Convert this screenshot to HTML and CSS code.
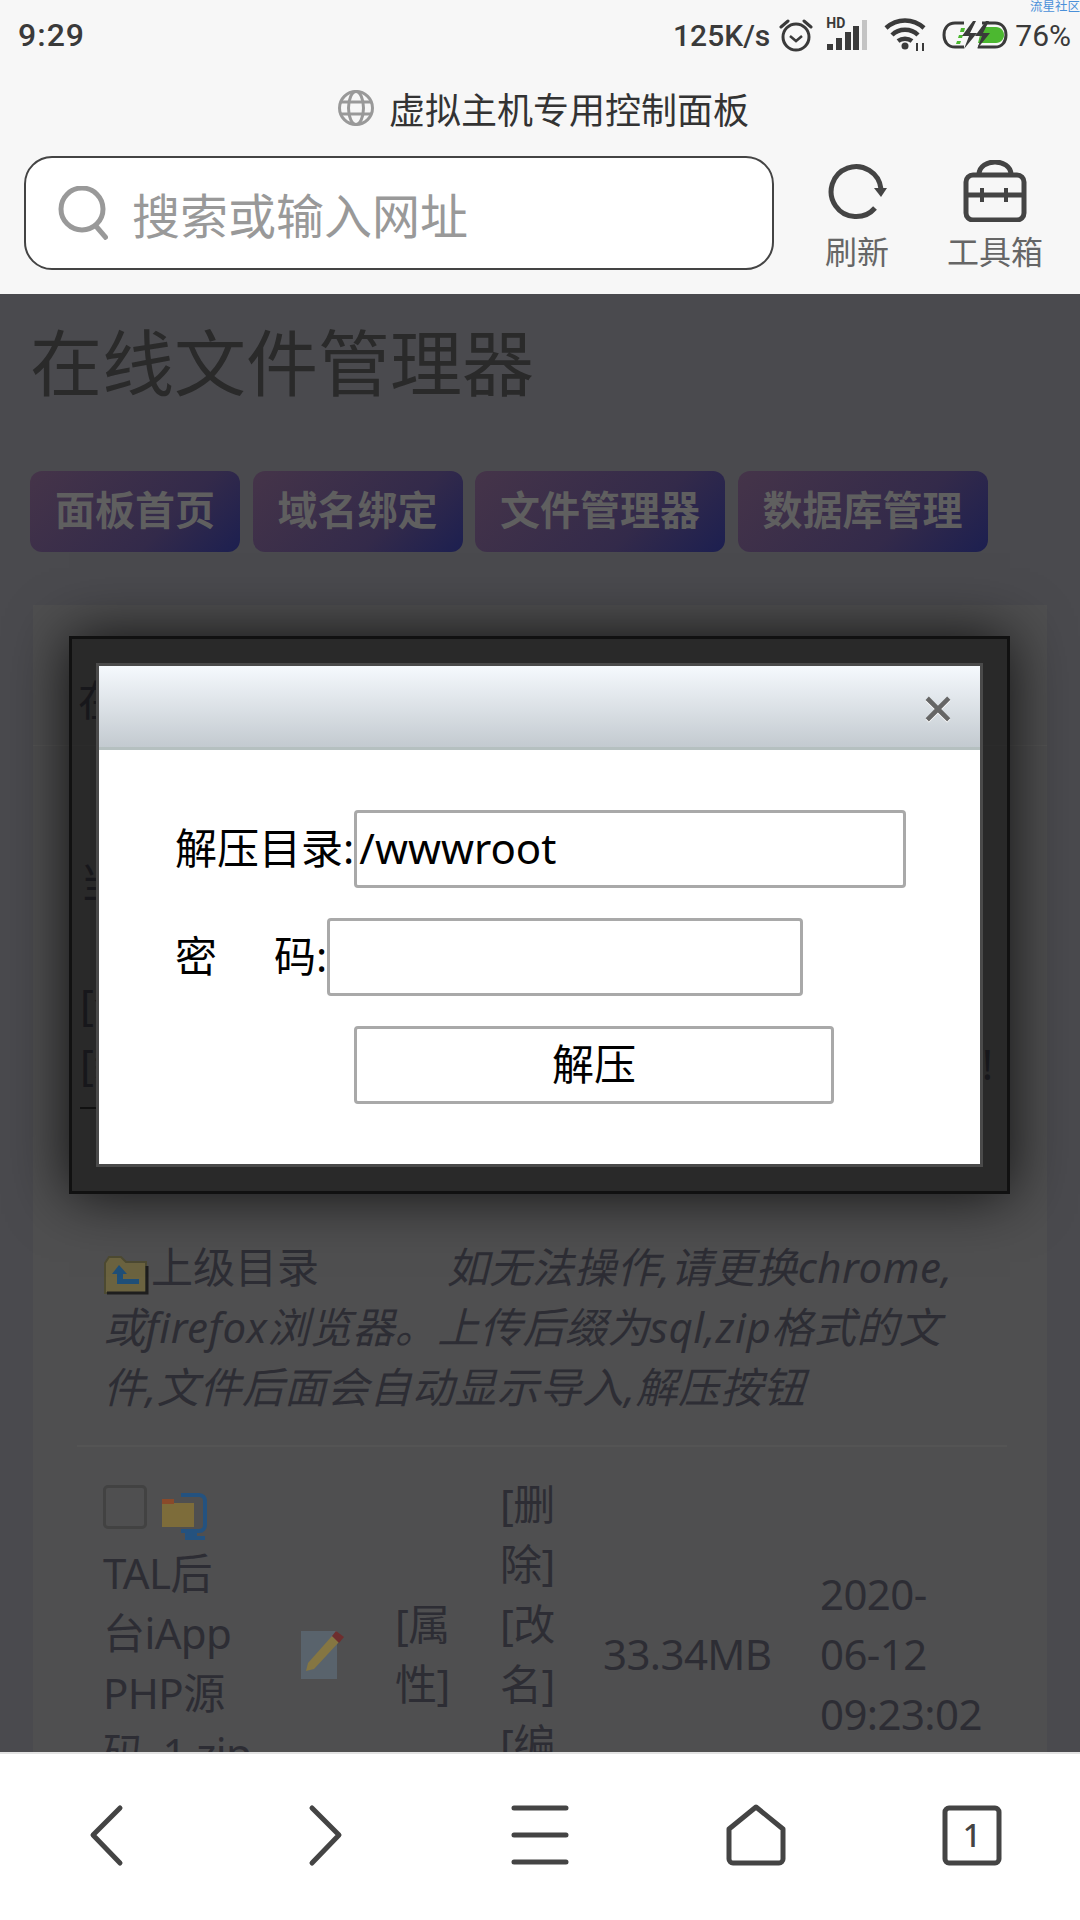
FILE: index.html
```html
<!DOCTYPE html>
<html lang="zh-CN">
<head>
  <meta charset="UTF-8" />
  <meta name="viewport" content="width=device-width, initial-scale=1" />
  <title>在线文件管理器</title>
  <link rel="stylesheet" href="styles.css">
</head>
<body>
  <div class="phone">
    <span class="watermark">流星社区</span>

    <!-- status bar -->
    <div class="statusbar">
      <span class="time">9:29</span>
      <div class="status-right">
        <span class="speed">125K/s</span>
        <svg class="st-clock" width="34" height="34" viewBox="0 0 34 34" fill="none" stroke="#3a3a3a" stroke-width="3">
          <circle cx="17" cy="19" r="13"/>
          <path d="M11 18l6 5 6-5" stroke-width="2.5"/>
          <path d="M2 9l7-6M32 9l-7-6" stroke-linecap="round"/>
        </svg>
        <span class="signal">
          <span class="hd">HD</span>
          <svg width="42" height="30" viewBox="0 0 42 30" fill="#3a3a3a">
            <rect x="1" y="24" width="6" height="6"/>
            <rect x="10" y="18" width="6" height="12"/>
            <rect x="19" y="12" width="6" height="18"/>
            <rect x="27" y="6" width="6" height="24"/>
            <rect x="36" y="0" width="5" height="30" fill="#c4c4c4"/>
          </svg>
        </span>
        <svg class="st-wifi" width="44" height="34" viewBox="0 0 44 34" fill="none" stroke="#3a3a3a" stroke-width="4.5">
          <path d="M2 10c11-10 27-10 38 0"/>
          <path d="M8 17c7-7 19-7 26 0"/>
          <path d="M14 23c4-3 10-3 14 0"/>
          <circle cx="21" cy="28" r="3.5" fill="#3a3a3a" stroke="none"/>
          <path d="M33 25v8M39 25v8" stroke-width="2"/>
        </svg>
        <svg class="st-batt" width="66" height="28" viewBox="0 0 66 28" fill="none">
          <path d="M22 2H13C6 2 2 7 2 14s4 12 11 12h9" stroke="#3a3a3a" stroke-width="3"/>
          <path d="M40 2h13c7 0 11 5 11 12s-4 12-11 12H36" stroke="#3a3a3a" stroke-width="3"/>
          <path d="M40 6h14c5 0 8 4 8 8s-3 8-8 8H36z" fill="#4cb830"/>
          <path d="M19 7h4l-1 4h-4zM17 14h4l-1 3h-4zM15 20h4l-1 3h-4z" fill="#4cb830"/>
          <path d="M31 0L20 15h7l-5 13 13-16h-7l6-12zM44 0L33 15h7l-5 13 13-16h-7l6-12z" fill="#3a3a3a"/>
        </svg>
        <span class="batt-text">76%</span>
      </div>
    </div>

    <!-- site name -->
    <div class="sitebar">
      <svg width="36" height="36" viewBox="0 0 36 36" fill="none" stroke="#999" stroke-width="3">
        <circle cx="18" cy="18" r="16.5"/>
        <ellipse cx="18" cy="18" rx="7.5" ry="16.5"/>
        <path d="M3 12h30M3 24h30"/>
      </svg>
      <span>虚拟主机专用控制面板</span>
    </div>

    <!-- search and tools -->
    <div class="searchbar">
      <div class="searchbox">
        <svg width="50" height="54" viewBox="0 0 50 54" fill="none" stroke="#999" stroke-width="5">
          <circle cx="24" cy="23" r="21"/>
          <path d="M37 39l12 14"/>
        </svg>
        <span>搜索或输入网址</span>
      </div>
      <div class="tool tool-refresh">
        <svg width="60" height="62" viewBox="0 0 60 62" fill="none" stroke="#444" stroke-width="5">
          <path d="M48 48A25 25 0 1 1 54 29"/>
          <path d="M47 28h13l-6 9z" fill="#444" stroke="none"/>
        </svg>
        <span>刷新</span>
      </div>
      <div class="tool tool-box">
        <svg width="64" height="62" viewBox="0 0 64 62" fill="none" stroke="#444" stroke-width="5">
          <rect x="3" y="15" width="58" height="45" rx="7"/>
          <path d="M16 14C17 -2 47 -2 48 14"/>
          <path d="M3 35h58"/>
          <path d="M19 28v14M43 28v14" stroke-width="4"/>
        </svg>
        <span>工具箱</span>
      </div>
    </div>

    <!-- web page, dimmed while the dialog is open -->
    <div class="webview">
      <h1 class="page-title">在线文件管理器</h1>
      <div class="page-nav">
        <a class="nav-btn">面板首页</a>
        <a class="nav-btn">域名绑定</a>
        <a class="nav-btn">文件管理器</a>
        <a class="nav-btn">数据库管理</a>
      </div>

      <div class="card">
        <div class="sec-head">在线文件管理</div>
        <div class="sec-path">
          <div class="path-line">当前目录</div>
          <div class="link-line">[全选]</div>
          <div class="link-line link-between"><span>[新建]</span><span>!</span></div>
          <div class="dash"></div>
        </div>

        <div class="sec-up">
          <svg class="up-icon" width="46" height="40" viewBox="0 0 46 40">
            <path d="M2 8l4-6h12l5 5h20v31H2z" fill="#6b6340" stroke="#4d4a32" stroke-width="2"/>
            <path d="M44 11v27H4" fill="none" stroke="#1e1e1e" stroke-width="3"/>
            <path d="M16 10l-7 9h5v10h22v-5H20v-5h4z" fill="#1f4f78"/>
          </svg><span class="up-link">上级目录</span><em class="up-note">　　　如无法操作,请更换chrome,<br>或firefox浏览器。上传后缀为sql,zip格式的文<br>件,文件后面会自动显示导入,解压按钮</em>
        </div>

        <div class="file-row">
          <div class="file-name">
            <div class="file-check">
              <span class="checkbox"></span>
              <svg width="46" height="48" viewBox="0 0 46 48">
                <path d="M20 2h18c4 0 6 3 6 6v24c0 3-2 6-6 6H20" fill="none" stroke="#24527f" stroke-width="4"/>
                <path d="M24 38h12v5h8v4H24z" fill="#24527f"/>
                <rect x="1" y="10" width="32" height="24" fill="#7d6c3a"/>
                <rect x="1" y="6" width="12" height="5" fill="#8a4a2a"/>
              </svg>
            </div>
            TAL后<br>台iApp<br>PHP源<br>码_1.zip
          </div>
          <svg class="edit-icon" width="46" height="50" viewBox="0 0 46 50">
            <rect x="1" y="2" width="36" height="48" fill="#59636c"/>
            <path d="M8 34L32 7l7 6-25 27-8 2z" fill="#857642"/>
            <path d="M32 7l4-5 8 6-5 6z" fill="#6e2e2e"/>
          </svg>
          <div>[属<br>性]</div>
          <div>[删<br>除]<br>[改<br>名]<br>[编<br>辑]</div>
          <div>33.34MB</div>
          <div>2020-<br>06-12<br>09:23:02</div>
        </div>
      </div>

      <!-- unzip dialog -->
      <div class="modal">
        <div class="modal-inner">
          <div class="modal-head"><span class="modal-close">×</span></div>
          <form class="modal-body">
            <label class="form-row"><span class="form-label">解压目录:</span><input class="input-path" type="text" value="/wwwroot"></label>
            <label class="form-row"><span class="form-label">密<span class="label-gap"></span>码:</span><input class="input-pass" type="text"></label>
            <div class="form-row form-submit"><button type="button">解压</button></div>
          </form>
        </div>
      </div>
    </div>

    <!-- browser toolbar -->
    <div class="toolbar">
      <svg width="64" height="64" viewBox="0 0 64 64" fill="none" stroke="#444" stroke-width="5" stroke-linecap="round" stroke-linejoin="round">
        <path d="M44 5L17 32l27 28"/>
      </svg>
      <svg width="64" height="64" viewBox="0 0 64 64" fill="none" stroke="#444" stroke-width="5" stroke-linecap="round" stroke-linejoin="round">
        <path d="M20 5l27 27-27 28"/>
      </svg>
      <svg width="64" height="64" viewBox="0 0 64 64" fill="none" stroke="#444" stroke-width="5" stroke-linecap="round">
        <path d="M6 5h52M6 32h52M6 59h52"/>
      </svg>
      <svg width="64" height="64" viewBox="0 0 64 64" fill="none" stroke="#444" stroke-width="5" stroke-linejoin="round">
        <path d="M5 26L32 4l27 22v30a4 4 0 0 1-4 4H9a4 4 0 0 1-4-4z"/>
      </svg>
      <svg width="64" height="64" viewBox="0 0 64 64" fill="none" stroke="#444" stroke-width="5">
        <rect x="5" y="5" width="54" height="55" rx="4"/>
        <text x="32" y="44" text-anchor="middle" font-size="32" font-weight="500" fill="#444" stroke="none">1</text>
      </svg>
    </div>
  </div>
</body>
</html>
```

FILE: styles.css
```css
* {
  margin: 0;
  padding: 0;
  box-sizing: border-box;
}
html, body {
  width: 1080px;
  height: 1920px;
  overflow: hidden;
}
body {
  font-family: "Noto Sans", "Noto Sans CJK SC", sans-serif;
  background: #f7f7f7;
  color: #222;
}
.phone {
  position: relative;
  width: 1080px;
  height: 1920px;
  display: flex;
  flex-direction: column;
}
.watermark {
  position: absolute;
  top: 0;
  right: 0;
  font-size: 12.5px;
  line-height: 13px;
  color: #4a90d9;
}

/* status bar */
.statusbar {
  height: 60px;
  flex: none;
  display: flex;
  justify-content: space-between;
  align-items: center;
  padding: 10px 9px 0 18px;
  font-family: Roboto, sans-serif;
  color: #3a3a3a;
}
.time {
  font-size: 32px;
  font-weight: 500;
  letter-spacing: 1px;
}
.status-right {
  display: flex;
  align-items: center;
}
.speed {
  font-size: 30px;
  font-weight: 500;
}
.st-clock {
  margin-left: 9px;
}
.signal {
  position: relative;
  margin-left: 13px;
  height: 30px;
}
.hd {
  position: absolute;
  left: 0;
  top: -4px;
  font-size: 14px;
  font-weight: 700;
  line-height: 14px;
}
.st-wifi {
  margin-left: 16px;
}
.st-batt {
  margin-left: 14px;
}
.batt-text {
  margin-left: 7px;
  font-size: 30px;
}

/* site name */
.sitebar {
  height: 96px;
  flex: none;
  display: flex;
  justify-content: center;
  align-items: center;
  gap: 15px;
  padding-left: 7px;
  font-size: 36px;
  color: #333;
}

/* search */
.searchbar {
  height: 138px;
  flex: none;
  display: flex;
  align-items: flex-start;
  padding-left: 24px;
}
.searchbox {
  width: 750px;
  height: 114px;
  display: flex;
  align-items: center;
  gap: 24px;
  padding-left: 32px;
  background: #fff;
  border: 2px solid #444;
  border-radius: 28px;
  font-size: 48px;
  color: #999;
}
.tool {
  display: flex;
  flex-direction: column;
  align-items: center;
  padding-top: 4px;
  font-size: 32px;
  line-height: 44px;
  color: #666;
}
.tool span {
  margin-top: 8px;
}
.tool-refresh {
  width: 96px;
  margin-left: 35px;
}
.tool-box {
  width: 120px;
  margin-left: 30px;
}

/* dimmed web page */
.webview {
  position: relative;
  flex: 1;
  overflow: hidden;
  background: #4a4a4e;
  font-size: 42px;
  line-height: 60px;
  color: #2d2d34;
}
.page-title {
  margin: 23px 0 0 30px;
  font-size: 72px;
  line-height: 90px;
  font-weight: 400;
  color: #2a2a2a;
}
.page-nav {
  display: flex;
  gap: 12.5px;
  margin: 64px 0 0 30px;
}
.nav-btn {
  height: 81px;
  padding: 0 25px;
  border-radius: 12px;
  background: linear-gradient(135deg, #453449, #332a4a 65%, #1c1f50);
  color: #5f5f5f;
  font-size: 40px;
  line-height: 78px;
  font-weight: 700;
}

.card {
  width: 1014px;
  margin: 53px 0 0 33px;
  background: #4f4f50;
  height: 1200px;
}
.sec-head {
  padding: 65px 0 15px 45px;
  border-bottom: 1px solid #545454;
}
.sec-path {
  padding: 106px 54px 0 47px;
}
.path-line + .link-line {
  margin-top: 62px;
}
.link-between {
  display: flex;
  justify-content: space-between;
}
.dash {
  width: 40px;
  height: 2px;
  margin-top: 13px;
  background: #222;
}
.sec-up {
  margin: 128px 40px 0 44px;
  padding: 0 0 28px 26px;
  border-bottom: 2px solid #545454;
}
.up-icon {
  vertical-align: -12px;
  margin-right: 2px;
}
.up-note {
  font-style: italic;
  letter-spacing: .5px;
}

.file-row {
  display: grid;
  grid-template-columns: 197px 95px 105px 103px 217px auto;
  align-items: center;
  margin: 27px 0 0 70px;
  height: 360px;
  letter-spacing: -.6px;
}
.file-name {
  align-self: start;
}
.file-check {
  height: 69px;
  display: flex;
  align-items: flex-end;
  gap: 14px;
  padding-bottom: 2px;
}
.checkbox {
  width: 44px;
  height: 44px;
  margin-bottom: 12px;
  border: 3px solid #424242;
  border-radius: 5px;
}

/* dialog */
.modal {
  position: absolute;
  left: 69px;
  top: 342px;
  width: 941px;
  padding: 24px;
  background: rgba(0, 0, 0, .48);
  border: 3px solid #111;
  box-shadow: 0 0 56px rgba(0, 0, 0, .8);
}
.modal-inner {
  border: 3px solid #4a4a4a;
  background: #fff;
}
.modal-head {
  height: 84px;
  display: flex;
  justify-content: flex-end;
  align-items: center;
  padding-right: 26px;
  background: linear-gradient(#f5f9fd, #c3cad0);
  border-bottom: 3px solid #b5c0c0;
}
.modal-close {
  font-size: 56px;
  line-height: 60px;
  font-weight: 500;
  color: #666;
  text-shadow: 0 1px 0 #fff;
}
.modal-body {
  height: 414px;
  display: flex;
  flex-direction: column;
  gap: 30px;
  padding: 60px 0 0 76px;
  color: #000;
  font-size: 42px;
}
.form-row {
  display: flex;
  align-items: center;
  height: 78px;
}
.form-label {
  padding-bottom: 2px;
}
.label-gap {
  display: inline-block;
  width: 57px;
}
.form-row input,
.form-row button {
  height: 78px;
  background: #fff;
  border: 3px solid #a9a9a9;
  border-radius: 4px;
  font: inherit;
  color: #000;
}
.form-row input {
  padding: 0 2px 3px;
}
.input-path {
  width: 552px;
}
.input-pass {
  width: 476px;
}
.form-submit {
  padding-left: 179px;
}
.form-submit button {
  width: 480px;
  padding-bottom: 2px;
}

/* browser toolbar */
.toolbar {
  height: 168px;
  flex: none;
  display: grid;
  grid-template-columns: repeat(5, 1fr);
  justify-items: center;
  align-items: center;
  padding-bottom: 4px;
  background: #fff;
  border-top: 2px solid #e2e2e2;
}
```
